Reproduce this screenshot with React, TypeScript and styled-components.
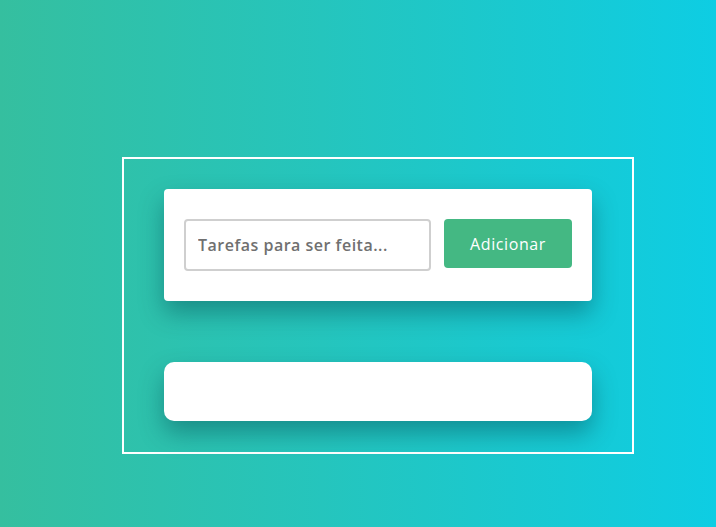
import React, { useState } from "react";
import styled, { createGlobalStyle } from "styled-components";

const GlobalStyle = createGlobalStyle`
  html, body {
    margin: 0;
    padding: 0;
    height: 100%;
  }
  body {
    font-family: "Open Sans", "Noto Sans", sans-serif;
  }
  #root {
    min-height: 100%;
  }
`;

const Page = styled.div`
  width: 716px;
  height: 527px;
  box-sizing: border-box;
  padding: 157px 0 0 122px;
  background: linear-gradient(90deg, #35bf9f 0%, #25c5bd 45%, #0ecde3 100%);
`;

const Frame = styled.div`
  width: 512px;
  height: 297px;
  box-sizing: border-box;
  border: 2px solid #fff;
  padding: 30px 40px;
  display: flex;
  flex-direction: column;
  gap: 61px;
`;

const Card = styled.div<{ $round?: boolean; $h: number }>`
  background: #fff;
  height: ${(p) => p.$h}px;
  box-sizing: border-box;
  border-radius: ${(p) => (p.$round ? 10 : 4)}px;
  box-shadow: 0 12px 24px rgba(0, 60, 70, 0.4);
`;

const Form = styled.form`
  display: flex;
  align-items: flex-start;
  gap: 13px;
  padding: 30px 20px;
`;

const Input = styled.input`
  width: 247px;
  height: 52px;
  box-sizing: border-box;
  border: 2px solid #cfcfcf;
  border-radius: 4px;
  padding: 0 12px;
  font-family: "Open Sans", sans-serif;
  font-weight: 600;
  font-size: 16px;
  letter-spacing: 0.5px;
  color: #555;
  outline: none;
  &::placeholder {
    color: #707070;
  }
`;

const Button = styled.button`
  width: 128px;
  height: 49px;
  border: none;
  border-radius: 4px;
  background: #44b883;
  color: #fff;
  font-family: "Open Sans", sans-serif;
  font-size: 16px;
  letter-spacing: 0.6px;
  cursor: pointer;
`;

const App: React.FC = () => {
  const [task, setTask] = useState("");
  return (
    <>
      <GlobalStyle />
      <Page>
        <Frame>
          <Card $h={112}>
            <Form onSubmit={(e) => e.preventDefault()}>
              <Input
                value={task}
                onChange={(e) => setTask(e.target.value)}
                placeholder="Tarefas para ser feita..."
              />
              <Button type="submit">Adicionar</Button>
            </Form>
          </Card>
          <Card $round $h={59} />
        </Frame>
      </Page>
    </>
  );
};

export default App;
